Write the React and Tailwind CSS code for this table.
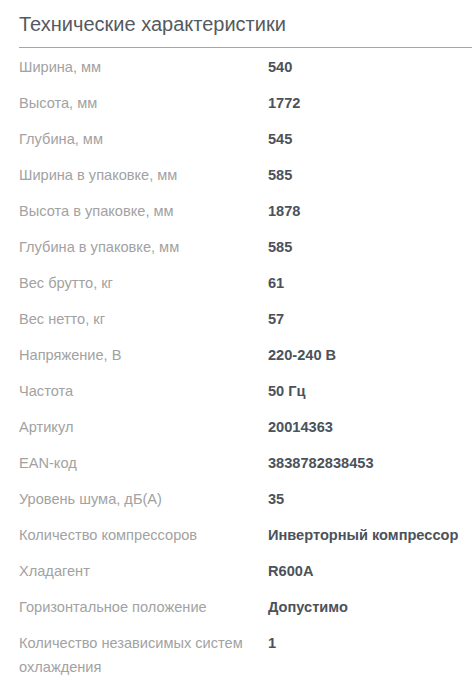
import React from "react";

const specs = [
    ["Ширина, мм", "540"],
    ["Высота, мм", "1772"],
    ["Глубина, мм", "545"],
    ["Ширина в упаковке, мм", "585"],
    ["Высота в упаковке, мм", "1878"],
    ["Глубина в упаковке, мм", "585"],
    ["Вес брутто, кг", "61"],
    ["Вес нетто, кг", "57"],
    ["Напряжение, В", "220-240 В"],
    ["Частота", "50 Гц"],
    ["Артикул", "20014363"],
    ["EAN-код", "3838782838453"],
    ["Уровень шума, дБ(А)", "35"],
    ["Количество компрессоров", "Инверторный компрессор"],
    ["Хладагент", "R600A"],
    ["Горизонтальное положение", "Допустимо"],
    ["Количество независимых систем охлаждения", "1"],
];

export default function App() {
    return (
        <div className="bg-white min-h-[688px] pl-[19px] pt-[10px] font-['Liberation_Sans',Arial,sans-serif]">
            <h2 className="text-[20px] leading-[28px] text-[#555a60] pb-[9px] border-b border-[#a3a6aa]">
                Технические характеристики
            </h2>
            <div className="pt-[1px]">
                {specs.map(([label, value]) => (
                    <div key={label} className="flex py-[6px] text-[14.6px] leading-[24px]">
                        <div className="w-[249px] shrink-0 pr-[4px] text-[#a2a2a2]">{label}</div>
                        <div className="font-bold text-[#4b525b]">{value}</div>
                    </div>
                ))}
            </div>
        </div>
    );
}
